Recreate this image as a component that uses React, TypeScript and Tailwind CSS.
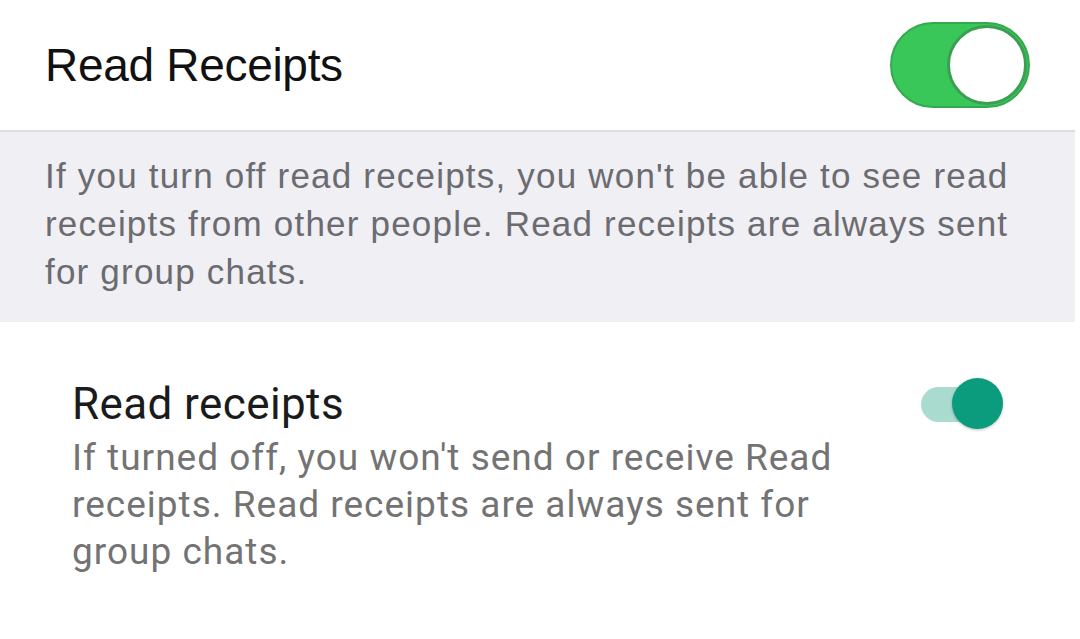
export default function App() {
  return (
    <div className="w-[1080px] h-[639px] bg-white overflow-hidden">
      {/* iOS style row */}
      <div className="h-[130px] flex items-center justify-between pl-[45px] pr-[50px]">
        <span className="text-[46px] text-[#111] tracking-[-0.3px]" style={{ fontFamily: '"Liberation Sans", Arial, sans-serif' }}>
          Read Receipts
        </span>
        <div className="w-[140px] h-[86px] rounded-full bg-[#3ac75a] border-2 border-[#35a94f] flex items-center justify-end pr-[1px]">
          <div className="w-[80px] h-[80px] rounded-full bg-white border-[3px] border-[#3a9f52]" />
        </div>
      </div>

      <div className="w-[1075px] h-[192px] bg-[#efeff4] border-t-2 border-[#dddde2] pl-[45px] pt-[20px]">
        <p className="text-[35px] leading-[48px] tracking-[1.2px] text-[#6b6b70]" style={{ fontFamily: '"Liberation Sans", Arial, sans-serif' }}>
          If you turn off read receipts, you won't be able to see read
          <br />
          receipts from other people. Read receipts are always sent
          <br />
          for group chats.
        </p>
      </div>

      {/* Android style row */}
      <div className="flex items-start justify-between pl-[72px] pr-[77px] pt-[58px]" style={{ fontFamily: 'Roboto, sans-serif' }}>
        <div>
          <p className="text-[44px] leading-[48px] tracking-[0.4px] text-[#1b1b1b]">Read receipts</p>
          <p className="text-[37px] leading-[47px] tracking-[1px] text-[#737373] mt-[6px]">
            If turned off, you won't send or receive Read
            <br />
            receipts. Read receipts are always sent for
            <br />
            group chats.
          </p>
        </div>
        <div className="relative w-[82px] h-[52px] mt-[-2px]">
          <div className="absolute left-0 top-[9px] w-[70px] h-[35px] rounded-full bg-[#a9dccf]" />
          <div className="absolute right-0 top-0 w-[51px] h-[51px] rounded-full bg-[#0b9c7d] shadow-[0_1px_3px_rgba(0,0,0,0.25)]" />
        </div>
      </div>
    </div>
  )
}
